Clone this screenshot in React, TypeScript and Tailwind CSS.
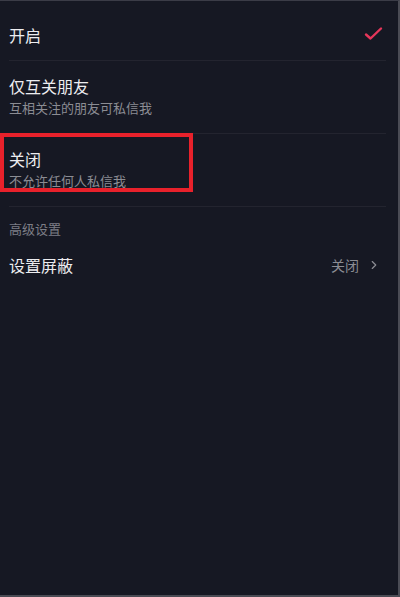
import { ChevronRight } from "lucide-react"

const FONT = { fontFamily: '"Noto Sans CJK SC", "Noto Sans", sans-serif' }

// ─── Option row with optional subtitle ─────────────────────────────────────
function OptionRow({
  title,
  subtitle,
  checked,
  highlight,
}: {
  title: string
  subtitle?: string
  checked?: boolean
  highlight?: boolean
}) {
  return (
    <div className="relative">
      <div
        className={
          subtitle
            ? "flex items-center justify-between pl-[9px] pr-[14px] pt-[14px] pb-[16px]"
            : "flex items-center justify-between pl-[9px] pr-[14px] pt-[24px] pb-[15px]"
        }
      >
        <div className="flex flex-col">
          <span className={subtitle ? "text-[16px] leading-[23px] text-[#ededf0]" : "text-[16px] leading-[20px] text-[#ededf0]"}>
            {title}
          </span>
          {subtitle && <span className="text-[13px] leading-[19px] text-[#8b8c93]">{subtitle}</span>}
        </div>
        {checked && (
          <svg width="20" height="16" viewBox="0 0 20 16" fill="none" className="-mt-[2px]">
            <polyline
              points="2,8.5 6.5,12.5 17,2.5"
              stroke="#e6365a"
              strokeWidth="2.4"
              strokeLinecap="round"
              strokeLinejoin="round"
            />
          </svg>
        )}
      </div>
      <div className="ml-[9px] mr-[12px] h-px bg-[#23242f]" />
      {highlight && (
        <div className="pointer-events-none absolute left-0 top-[-1px] h-[59px] w-[193px] border-[4px] border-[#e8212b]" />
      )}
    </div>
  )
}

export default function App() {
  return (
    <div
      className="flex h-[597px] w-[400px] flex-col overflow-hidden border-t border-r-2 border-b-2 border-t-[#3b3c47] border-r-[#4a4b54] border-b-[#4a4b54] bg-[#161823]"
      style={FONT}
    >
      <OptionRow title="开启" checked />
      <OptionRow title="仅互关朋友" subtitle="互相关注的朋友可私信我" />
      <OptionRow title="关闭" subtitle="不允许任何人私信我" highlight />

      {/* ── Advanced ─────────────────────────────────────────── */}
      <div className="pl-[9px] pt-[14px] text-[13px] leading-[16px] text-[#7d7e86]">高级设置</div>
      <div className="flex items-center justify-between pl-[9px] pr-[17px] pt-[18px]">
        <span className="text-[16px] leading-[20px] text-[#ededf0]">设置屏蔽</span>
        <div className="flex items-center gap-[8px]">
          <span className="text-[14px] leading-[20px] text-[#8b8c93]">关闭</span>
          <ChevronRight className="h-[14px] w-[14px] text-[#8b8c93]" strokeWidth={2} />
        </div>
      </div>
    </div>
  )
}
